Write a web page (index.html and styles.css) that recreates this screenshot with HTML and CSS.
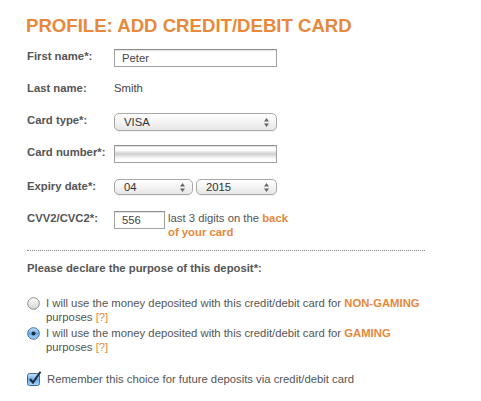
FILE: index.html
```html
<!DOCTYPE html>
<html>
<head>
<meta charset="utf-8">
<link rel="stylesheet" href="styles.css">
</head>
<body>
<div class="page">
  <h1 class="title">PROFILE: ADD CREDIT/DEBIT CARD</h1>
  <div class="form">
    <div class="row">
      <div class="label">First name*:</div>
      <div class="input wide">Peter</div>
    </div>
    <div class="row">
      <div class="label">Last name:</div>
      <div class="value">Smith</div>
    </div>
    <div class="row">
      <div class="label">Card type*:</div>
      <div class="select wide"><span>VISA</span>
        <svg class="arrows" width="7" height="11" viewBox="0 0 7 11"><path d="M3.5 1 L6 4.5 H1 Z M3.5 10 L6 6.5 H1 Z" fill="#666"/></svg>
      </div>
    </div>
    <div class="row">
      <div class="label">Card number*:</div>
      <div class="input wide blurred"></div>
    </div>
    <div class="row row-expiry">
      <div class="label">Expiry date*:</div>
      <div class="pair">
        <div class="select small month"><span>04</span>
          <svg class="arrows" width="7" height="11" viewBox="0 0 7 11"><path d="M3.5 1 L6 4.5 H1 Z M3.5 10 L6 6.5 H1 Z" fill="#666"/></svg>
        </div>
        <div class="select small year"><span>2015</span>
          <svg class="arrows" width="7" height="11" viewBox="0 0 7 11"><path d="M3.5 1 L6 4.5 H1 Z M3.5 10 L6 6.5 H1 Z" fill="#666"/></svg>
        </div>
      </div>
    </div>
    <div class="row row-cvv">
      <div class="label">CVV2/CVC2*:</div>
      <div class="input cvv">556</div>
      <div class="hint"><span>last 3 digits on the <b class="orange">back</b></span><b class="orange line2">of your card</b></div>
    </div>
  </div>
  <div class="divider"></div>
  <div class="declare">Please declare the purpose of this deposit*:</div>
  <div class="options">
    <div class="option">
      <svg class="radio" width="13" height="13" viewBox="0 0 13 13">
        <defs><linearGradient id="rg" x1="0" y1="0" x2="0" y2="1"><stop offset="0" stop-color="#ffffff"/><stop offset="1" stop-color="#d4d4d4"/></linearGradient></defs>
        <circle cx="6.5" cy="6.5" r="5.8" fill="url(#rg)" stroke="#8a8a8a" stroke-width="1"/>
      </svg>
      <div class="otext">I will use the money deposited with this credit/debit card for <b class="orange">NON-GAMING</b><br>purposes <span class="orange">[?]</span></div>
    </div>
    <div class="option">
      <svg class="radio" width="13" height="13" viewBox="0 0 13 13">
        <defs><linearGradient id="bg" x1="0" y1="0" x2="0" y2="1"><stop offset="0" stop-color="#c9e3fb"/><stop offset="0.5" stop-color="#6eaee8"/><stop offset="1" stop-color="#a9d4fa"/></linearGradient></defs>
        <circle cx="6.5" cy="6.5" r="5.8" fill="url(#bg)" stroke="#3d6f9e" stroke-width="1"/>
        <circle cx="6.5" cy="6.5" r="2" fill="#1c2c3c"/>
      </svg>
      <div class="otext">I will use the money deposited with this credit/debit card for <b class="orange">GAMING</b><br>purposes <span class="orange">[?]</span></div>
    </div>
  </div>
  <div class="remember">
    <svg class="check" width="15" height="15" viewBox="0 0 15 15">
      <defs><linearGradient id="cg" x1="0" y1="0" x2="0" y2="1"><stop offset="0" stop-color="#c9e3fb"/><stop offset="0.5" stop-color="#6eaee8"/><stop offset="1" stop-color="#a9d4fa"/></linearGradient></defs>
      <rect x="0.5" y="2.5" width="12" height="12" rx="2" fill="url(#cg)" stroke="#3d6f9e"/>
      <path d="M3 8 L6 11.5 L13.5 0.8" fill="none" stroke="#1c2c3c" stroke-width="2"/>
    </svg>
    <span>Remember this choice for future deposits via credit/debit card</span>
  </div>
</div>
</body>
</html>
```
FILE: styles.css
```css
body {
  margin: 0;
  background: #fff;
  font-family: "Liberation Sans", Arial, Helvetica, sans-serif;
  font-size: 11.3px;
  line-height: 14px;
  color: #4a4a4a;
}
.page {
  padding: 16px 0 0 26px;
}
.title {
  margin: 0;
  font-size: 18.6px;
  line-height: 20px;
  font-weight: bold;
  color: #e8883a;
}
.orange {
  color: #e8883a;
}
.form {
  margin-top: 13px;
  padding-left: 1px;
}
.row {
  display: flex;
  align-items: flex-start;
  height: 32px;
}
.row-expiry {
  padding-top: 2px;
}
.row-cvv {
  height: 39px;
}
.label {
  width: 87px;
  font-weight: bold;
  color: #555;
}
.value {
  color: #444;
}
.input {
  box-sizing: border-box;
  height: 18px;
  border: 1px solid #a2a2a2;
  border-top-color: #8e8e8e;
  box-shadow: inset 0 1px 1px rgba(0,0,0,0.12);
  background: #fff;
  padding: 1px 0 0 7px;
  color: #444;
  line-height: 14px;
}
.wide {
  width: 163px;
}
.blurred {
  background: linear-gradient(to bottom, #fff 0, #fff 4px, #e6e6e6 6px, #cfcfcf 8px, #e4e4e4 10px, #fff 13px, #fff 100%);
}
.cvv {
  width: 51px;
}
.hint {
  display: flex;
  flex-direction: column;
  margin-left: 3px;
  color: #555;
}
.line2 {
  display: block;
}
.select {
  position: relative;
  box-sizing: border-box;
  height: 18px;
  border: 1px solid #a8a8a8;
  border-radius: 5px;
  background: linear-gradient(to bottom, #ffffff 0%, #f4f4f4 50%, #e6e6e6 100%);
  box-shadow: 0 1px 0 rgba(0,0,0,0.05);
  padding: 1px 0 0 9px;
  color: #333;
}
.select.small {
  height: 16px;
  padding-top: 0;
  line-height: 14px;
}
.arrows {
  position: absolute;
  right: 6px;
  top: 3px;
}
.small .arrows {
  top: 2px;
}
.pair {
  display: flex;
  gap: 3px;
}
.month {
  width: 79px;
}
.year {
  width: 81px;
}
.divider {
  width: 398px;
  margin-left: 1px;
  border-top: 1px dotted #888;
  height: 0;
}
.declare {
  margin-top: 10px;
  margin-left: 1px;
  font-weight: bold;
  color: #555;
}
.options {
  margin-top: 21px;
  display: flex;
  flex-direction: column;
  gap: 2px;
}
.option {
  display: flex;
  align-items: flex-start;
}
.radio {
  margin: 1px 6px 0 1px;
  flex: none;
}
.otext {
  color: #555;
}
.remember {
  margin-top: 18px;
  display: flex;
  align-items: center;
  color: #555;
}
.check {
  margin: -2px 5px 0 1px;
  flex: none;
}
```
